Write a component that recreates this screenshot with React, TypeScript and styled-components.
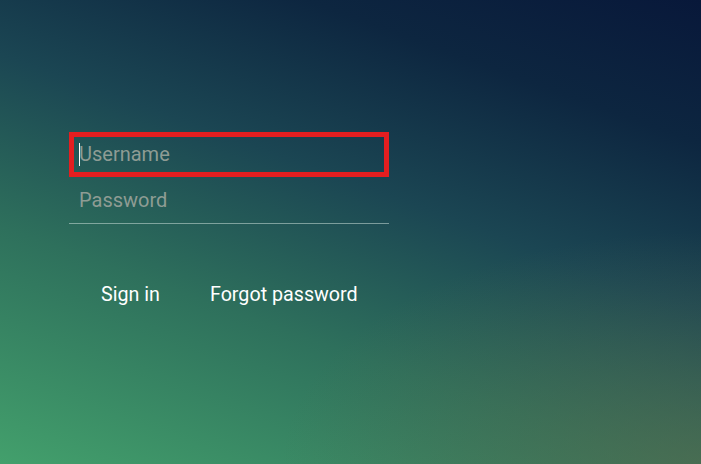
import styled, { createGlobalStyle } from 'styled-components';

const GlobalStyle = createGlobalStyle`
  html, body {
    margin: 0;
    padding: 0;
    height: 100%;
  }
  #root {
    height: 100%;
  }
`;

const StyledPage = styled.div`
  box-sizing: border-box;
  height: 100vh;
  padding: 132px 0 0 69px;
  font-family: Roboto, 'Liberation Sans', sans-serif;
  background:
    radial-gradient(ellipse 60% 50% at 100% 100%, rgba(95, 110, 75, 0.55), transparent 100%),
    linear-gradient(20deg, #43a06c 0%, #2e705c 33%, #1b4653 57%, #0d2640 80%, #08183a 100%);
  overflow: hidden;
`;

const StyledForm = styled.form`
  display: flex;
  flex-direction: column;
  width: 320px;
`;

const StyledField = styled.div`
  position: relative;
`;

// drawn caret so the focused field shows it even when the page has no focus
const StyledCaret = styled.span`
  position: absolute;
  left: 10px;
  top: 11px;
  width: 1px;
  height: 23px;
  background: #fff;
  pointer-events: none;
`;

const StyledInput = styled.input<{ $focused?: boolean }>`
  display: block;
  box-sizing: border-box;
  width: 320px;
  height: ${({ $focused }) => ($focused ? '45px' : '47px')};
  margin: 0;
  padding: 0 0 0 10px;
  background: transparent;
  border: none;
  border-bottom: 1px solid rgba(200, 220, 215, 0.55);
  outline: ${({ $focused }) => ($focused ? '5px solid #e41e20' : 'none')};
  outline-offset: -5px;
  color: #fff;
  caret-color: transparent;
  font-family: Roboto, 'Liberation Sans', sans-serif;
  font-size: 20px;

  &::placeholder {
    color: #8e9c94;
    opacity: 1;
  }
`;

const StyledActions = styled.div`
  display: flex;
  gap: 50px;
  margin: 60px 0 0 32px;
`;

const StyledLink = styled.button`
  padding: 0;
  background: none;
  border: none;
  color: #fff;
  font-family: Roboto, 'Liberation Sans', sans-serif;
  font-size: 19.7px;
  line-height: 22px;
  cursor: pointer;
`;

const App = () => (
  <>
    <GlobalStyle />
    <StyledPage>
      <StyledForm onSubmit={(e) => e.preventDefault()}>
        <StyledField>
          <StyledInput $focused type="text" placeholder="Username" />
          <StyledCaret />
        </StyledField>
        <StyledInput type="password" placeholder="Password" />
        <StyledActions>
          <StyledLink type="submit">Sign in</StyledLink>
          <StyledLink type="button">Forgot password</StyledLink>
        </StyledActions>
      </StyledForm>
    </StyledPage>
  </>
);

export default App;
